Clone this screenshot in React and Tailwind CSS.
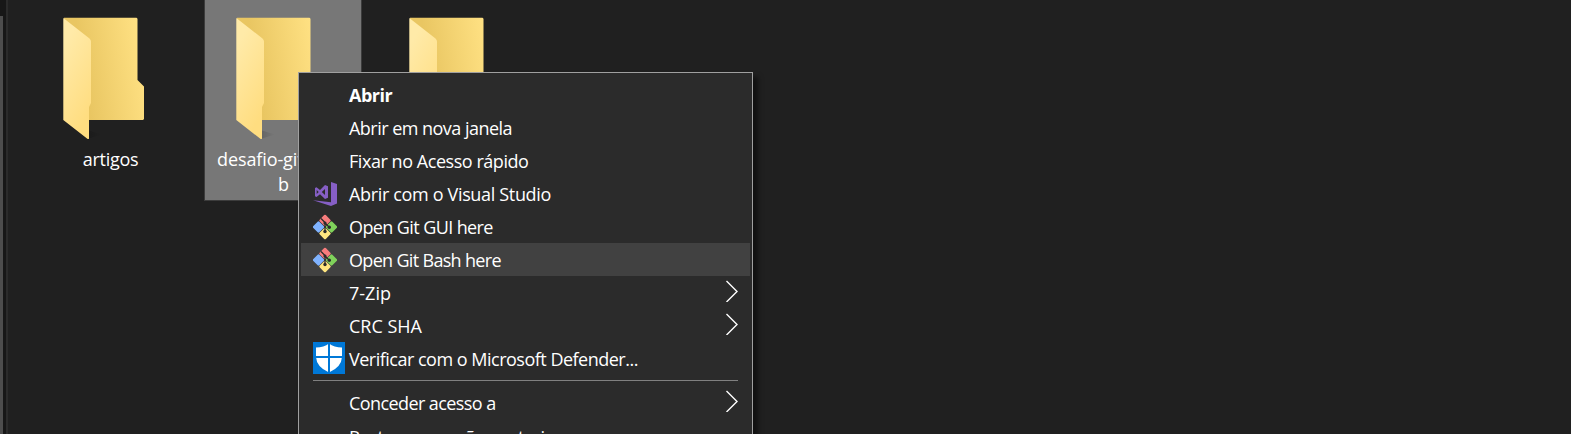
import React from "react";

function Folder({ id }) {
  return (
    <svg width="84" height="125" viewBox="0 0 84 125" className="shrink-0">
      <defs>
        <linearGradient id={id + "b"} x1="0" y1="0.6" x2="1" y2="0.4">
          <stop offset="0.25" stopColor="#e9c662" />
          <stop offset="1" stopColor="#ffe183" />
        </linearGradient>
        <linearGradient id={id + "f"} x1="0" y1="0" x2="0.4" y2="1">
          <stop offset="0.2" stopColor="#ffeaa8" />
          <stop offset="1" stopColor="#ffdd80" />
        </linearGradient>
        <linearGradient id={id + "s"}>
          <stop offset="0" stopColor="#000" stopOpacity="0.15" />
          <stop offset="1" stopColor="#000" stopOpacity="0" />
        </linearGradient>
      </defs>
      <path d="M26 121.500l13-4-13-4z" fill={`url(#${id}s)`} />
      <path d="M1 .7H73.500l1 1V63l6.500 6.500v32.500l-1 1H1z" fill={`url(#${id}b)`} />
      <path d="M.3 1L26.500 21.500q1.500 1.500 1.500 3V86l-2 4V121.500q-.5 1-2 0L.3 103z" fill={`url(#${id}f)`} />
    </svg>
  );
}

function VisualStudio() {
  return (
    <svg width="24" height="24" viewBox="0 0 24 24" fill="#865fc5">
      <path d="M18 0l6 2V21.500l-6 2.500L0 18.300l18 2z" />
      <path
        fillRule="evenodd"
        d="M12 3L15 4.200V15.800L12 17 7 12.200 3.500 15 2 14.300V6L3.500 5.200 7 8zM12 7L8.800 10 12 13zM3.700 8v4L5.700 10z"
      />
    </svg>
  );
}

function Git() {
  return (
    <svg width="24" height="26" viewBox="1 0 24 26">
      <g transform="rotate(45 13 13)">
        <rect x="4" y="4" width="8.800" height="8.800" rx="1.200" fill="#f77c7c" />
        <rect x="13.200" y="4" width="8.800" height="8.800" rx="1.200" fill="#80d25b" />
        <rect x="4" y="13.200" width="8.800" height="8.800" rx="1.200" fill="#80b3ff" />
        <rect x="13.200" y="13.200" width="8.800" height="8.800" rx="1.200" fill="#ffe680" />
      </g>
      <path d="M9 4.500L13 8.500v9M13 9l4.500 4.500" stroke="#2b2b2b" strokeWidth="1.300" fill="none" />
      <g fill="#2b2b2b">
        <circle cx="13" cy="9" r="1.600" />
        <circle cx="13" cy="17.500" r="1.700" />
        <circle cx="17.300" cy="13.200" r="1.700" />
      </g>
    </svg>
  );
}

function Defender() {
  return (
    <svg width="32" height="32" viewBox="0 0 32 32" className="mb-px shrink-0">
      <path fill="#0078d7" d="M0 0h32v32H0z" />
      <path fill="#fff" d="M3 5.500Q11 5.500 16 1.500 21 5.500 29 5.500V15Q28.500 25 16 30.500 3.500 25 3 15z" />
      <path stroke="#0078d7" strokeWidth="2" d="M16 0v32M2 15h28" />
    </svg>
  );
}

function Chevron() {
  return (
    <svg width="12" height="22" viewBox="0 0 12 22" fill="none" stroke="#fff" strokeWidth="1.400">
      <path d="M.5 1L11 11.500 .5 22" />
    </svg>
  );
}

function Item({ icon, sub, active, className = "", children }) {
  return (
    <div className={`flex h-[33px] shrink-0 items-center pr-[12px] ${active ? "bg-[#414141]" : ""}`}>
      <div className="ml-[12px] flex w-[36px] shrink-0 items-center">{icon}</div>
      <span className={`grow whitespace-nowrap text-[18px] leading-[24px] ${className}`}>{children}</span>
      {sub && <div className="mb-[3px]"><Chevron /></div>}
    </div>
  );
}

export default function App() {
  return (
    <div className="relative flex h-[434px] w-full overflow-hidden bg-[#202020] font-['Open_Sans',sans-serif] text-[18px] text-white">
      <div className="flex w-[5px] flex-col bg-[#171717]">
        <div className="mt-[16px] w-[3px] grow bg-[#4d4d4d]" />
      </div>
      <div className="w-[3px] border-l border-[#171717] bg-[#2b2b2b]" />
      <div className="flex gap-[15px] pl-[24px]">
        <div className="flex h-[201px] w-[157px] flex-col pt-[17px]">
          <div className="pl-[31px]"><Folder id="a" /></div>
          <div className="mt-[5px] text-center leading-[25px] tracking-[-0.3px]">artigos</div>
        </div>
        <div className="flex h-[201px] w-[158px] flex-col border border-t-0 border-[#3c3c3c] bg-[#777] pt-[17px]">
          <div className="pl-[31px]"><Folder id="b" /></div>
          <div className="mt-[5px] whitespace-nowrap pl-[12px] leading-[25px] tracking-[-0.1px]">desafio-git-we</div>
          <div className="pl-px text-center leading-[25px]">b</div>
        </div>
        <div className="flex h-[201px] w-[157px] flex-col pt-[17px]">
          <div className="pl-[32px]"><Folder id="c" /></div>
        </div>
      </div>
      <div className="absolute left-[298px] top-[72px] flex h-[400px] w-[455px] flex-col border border-[#a0a0a0] bg-[#2b2b2b] px-[2px] pt-[5px] shadow-[5px_5px_5px_rgba(0,0,0,0.5)]">
        <Item className="font-bold tracking-[-0.5px]">Abrir</Item>
        <Item className="tracking-[-0.53px]">Abrir em nova janela</Item>
        <Item className="tracking-[-0.45px]">Fixar no Acesso rápido</Item>
        <Item className="tracking-[-0.34px]" icon={<VisualStudio />}>Abrir com o Visual Studio</Item>
        <Item className="tracking-[-0.6px]" icon={<Git />}>Open Git GUI here</Item>
        <Item className="tracking-[-0.68px]" icon={<Git />} active>Open Git Bash here</Item>
        <Item sub>7-Zip</Item>
        <Item sub>CRC SHA</Item>
        <Item className="tracking-[-0.5px]" icon={<Defender />}>Verificar com o Microsoft Defender...</Item>
        <div className="mx-[12px] mb-[5px] mt-[5px] h-px shrink-0 bg-[#808080]" />
        <Item className="tracking-[-0.58px]" sub>Conceder acesso a</Item>
        <Item className="pt-[2px] tracking-[-0.4px]">Restaurar versões anteriores</Item>
      </div>
    </div>
  );
}
